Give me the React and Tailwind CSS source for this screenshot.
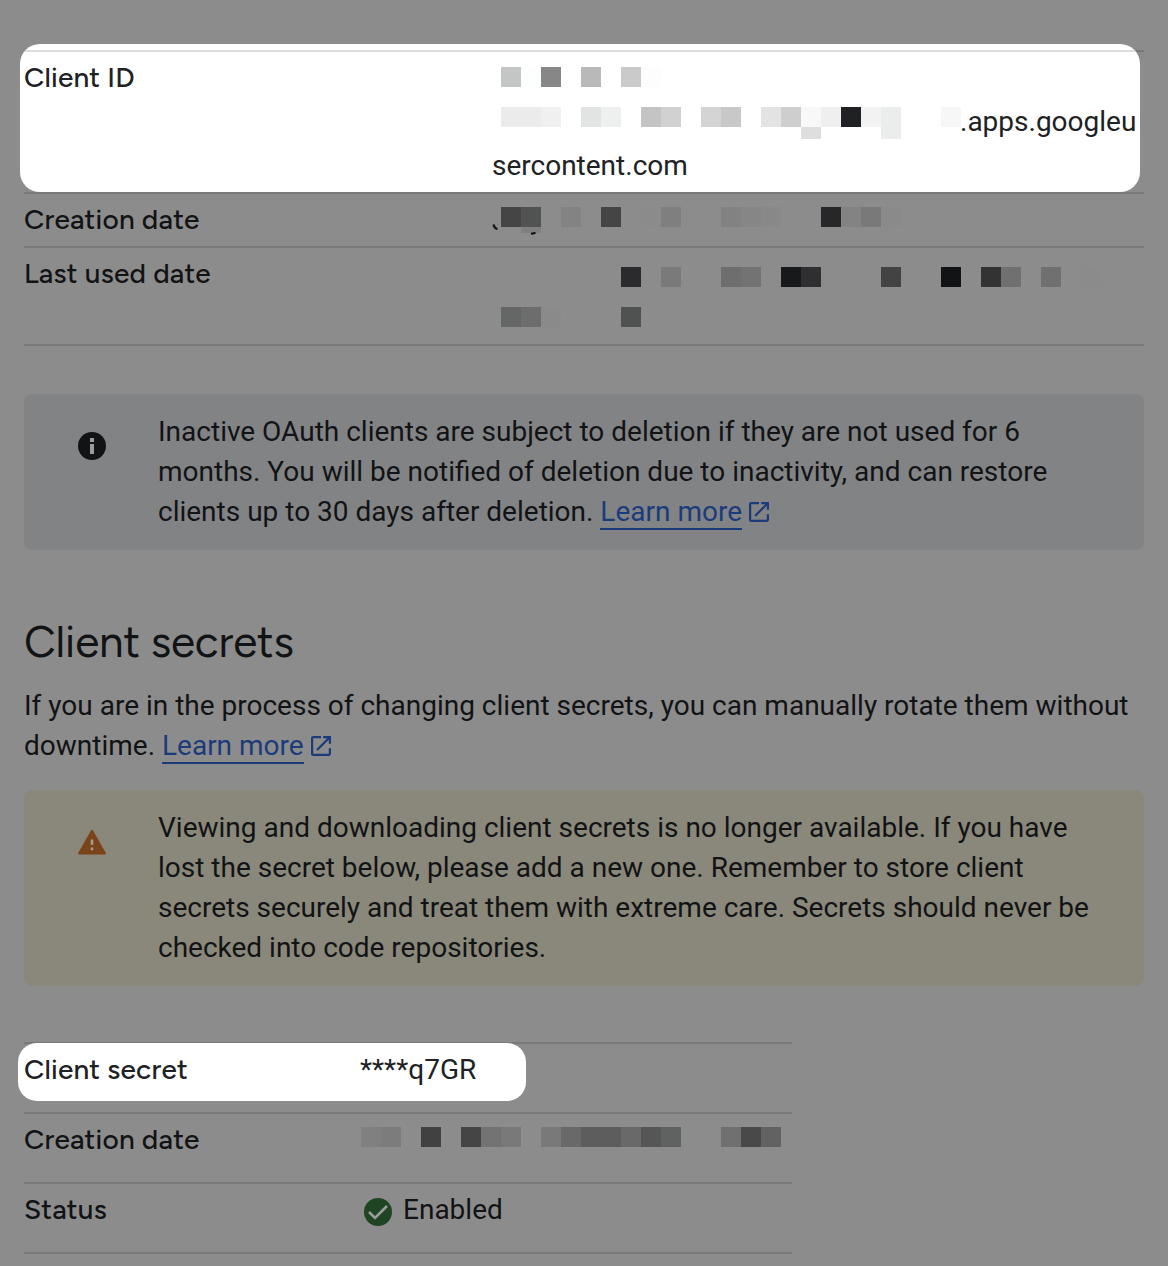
import React from "react";

const BODY = "font-['Roboto',sans-serif] text-[28px] leading-[40px]";

// A strip of 20px blocks that hides a value; null leaves a gap.
function Mosaic({ cells }) {
  return (
    <div className="flex h-5">
      {cells.map((c, i) => (
        <span key={i} className="h-5 w-5 shrink-0" style={{ backgroundColor: c || "transparent" }} />
      ))}
    </div>
  );
}

function Label({ children, className = "" }) {
  return (
    <dt className={"shrink-0 pt-[5px] font-['Figtree','Lato',sans-serif] text-[28px] leading-[40px] font-[550] tracking-[0.2px] " + className}>
      {children}
    </dt>
  );
}

function LearnMore() {
  return (
    <a className="text-[#1b3b7b]">
      <span className="inline-block h-[38px] border-b-2 border-[#1b3b7b] leading-[40px]">Learn more</span>
      <svg className="ml-[7px] inline-block align-[-1px]" width="20" height="20" viewBox="3 3 18 18" fill="currentColor">
        <path d="M19 19H5V5h7V3H5a2 2 0 0 0-2 2v14a2 2 0 0 0 2 2h14c1.1 0 2-.9 2-2v-5h-2v5zM14 3v2h3.59l-9.83 9.83 1.41 1.41L19 6.41V10h2V3h-7z" />
      </svg>
    </a>
  );
}

function Notice({ tone, icon, children }) {
  return (
    <div className={"flex rounded-[8px] py-[18px] " + tone}>
      <div className="w-[134px] shrink-0 pl-[54px]">{icon}</div>
      <p className="whitespace-nowrap">{children}</p>
    </div>
  );
}

export default function App() {
  return (
    <main className={"h-[1266px] w-[1168px] overflow-hidden bg-[#8c8c8c] px-6 pt-[50px] text-[#121315] " + BODY}>
      <dl className="border-b-2 border-[#797979]">
        <div className="relative flex h-[142px] border-t-2 border-[#797979] text-[#202124]">
          <div className="absolute -top-[8px] -left-[4.5px] h-[147.5px] w-[1120.5px] overflow-hidden rounded-[20px] bg-white pt-[6px]">
            <div className="h-[2px] bg-[#dadce0]" />
          </div>
          <Label className="relative w-[468px]">Client ID</Label>
          <dd className="relative pt-[15px]">
            <div className="pl-[9px]">
              <Mosaic cells={["#c4c6c5", "#fcfffe", "#878787", null, "#b9b9b9", null, "#cacaca", "#fdfdfd"]} />
            </div>
            <div className="mt-[13px] flex h-[44px]">
              <div className="w-[468px] shrink-0 pt-[7px] pl-[9px]">
                <Mosaic
                  cells={["#ebebeb", "#ebebeb", "#f0f0f0", null, "#e2e4e3", "#eef0ef", null, "#c4c4c4", "#d1d1d1", null, "#d4d4d4", "#c8c8c8", null, "#e3e3e3", "#cecece", "#f8f8f8", "#efefef", "#202124", "#f2f2f2", "#ebedec", null, null, "#f7f7f7"]}
                />
                <div className="flex gap-[60px] pl-[300px]">
                  <span className="h-[12px] w-5 bg-[#dedede]" />
                  <span className="h-[12px] w-5 bg-[#ebecec]" />
                </div>
              </div>
              <span className="leading-[44px]">.apps.googleu</span>
            </div>
            <div className="leading-[44px]">sercontent.com</div>
          </dd>
        </div>

        <div className="flex h-[54px] border-t-2 border-[#797979]">
          <Label className="w-[468px]">Creation date</Label>
          <dd className="relative pt-[13px] pl-[9px]">
            <Mosaic
              cells={["#454545", "#505352", null, "#838383", null, "#454545", null, "#8b8b8b", "#7f7f7f", null, null, "#828282", "#868686", "#888888", null, null, "#27272a", "#838383", "#797979", "#8a8a8a"]}
            />
            <span className="absolute top-[33px] left-[29px] h-[6px] w-5 bg-[#7f7f7f]" />
            <svg className="absolute top-[29px] left-0" width="50" height="12" viewBox="0 0 50 12" fill="none" stroke="#121315" strokeWidth="2.2">
              <path d="M1.500 1.500C2 4 3 5.400 5.500 6" />
              <path d="M39 10.500C41 10.700 42.500 10.300 43.500 9.500" />
            </svg>
          </dd>
        </div>

        <div className="flex h-[98px] border-t-2 border-[#797979]">
          <Label className="w-[468px]">Last used date</Label>
          <dd className="flex flex-col gap-5 pt-[19px] pl-[9px]">
            <Mosaic
              cells={[null, null, null, null, null, null, "#2b2b2d", null, "#7a7a7a", null, null, "#6e6e6e", "#737373", null, "#18191a", "#2f2f31", null, null, null, "#434343", null, null, "#121315", null, "#333333", "#707070", null, "#707070", null, "#8b8b8b"]}
            />
            <Mosaic cells={["#646766", "#6d6d6d", "#8a8a8a", null, null, null, "#4f5251"]} />
          </dd>
        </div>
      </dl>

      <div className="mt-[48px]">
        <Notice
          tone="bg-[#828385]"
          icon={
            <svg className="mt-5 block" width="28" height="28" viewBox="0 0 28 28">
              <circle cx="14" cy="14" r="14" fill="#121315" />
              <path d="M12 6h4v4h-4zM12 12h4v10h-4z" fill="#9a9b9d" />
            </svg>
          }
        >
          Inactive OAuth clients are subject to deletion if they are not used for 6<br />
          months. You will be notified of deletion due to inactivity, and can restore<br />
          clients up to 30 days after deletion. <LearnMore />
        </Notice>
      </div>

      <h2 className="mt-[64px] font-['Figtree','Lato',sans-serif] text-[44px] leading-[56px] font-normal tracking-[-0.15px]">Client secrets</h2>
      <p className="mt-[16px] h-20 whitespace-nowrap">
        If you are in the process of changing client secrets, you can manually rotate them without<br />
        downtime. <LearnMore />
      </p>

      <div className="mt-[24px]">
        <Notice
          tone="bg-[#8a887a]"
          icon={
            <svg className="mt-[21px] block" width="28" height="26" viewBox="0 0 28 26">
              <path d="M13 1.500Q14 0 15 1.500L27.700 23.800Q28.400 25.500 26.800 25.500H1.200Q-.4 25.500 .3 23.800Z" fill="#7a441b" />
              <path d="M12.700 10.500h2.600v5.500h-2.600zM12.700 18.500h2.600v2.700h-2.600z" fill="#a39c8b" />
            </svg>
          }
        >
          Viewing and downloading client secrets is no longer available. If you have<br />
          lost the secret below, please add a new one. Remember to store client<br />
          secrets securely and treat them with extreme care. Secrets should never be<br />
          checked into code repositories.
        </Notice>
      </div>

      <dl className="mt-[56px] w-[768px] border-b-2 border-[#797979]">
        <div className="relative flex h-[70px] border-t-2 border-[#797979] text-[#202124]">
          <div className="absolute -top-[1px] -left-[6px] h-[58px] w-[508px] rounded-[19px] bg-white" />
          <Label className="relative w-[336px]">Client secret</Label>
          <dd className="relative pt-[6px]">****q7GR</dd>
        </div>
        <div className="flex h-[70px] border-t-2 border-[#797979]">
          <Label className="w-[336px]">Creation date</Label>
          <dd className="pt-[13px] pl-[1px]">
            <Mosaic
              cells={["#808080", "#7c7c7c", null, "#414141", null, "#454545", "#737373", "#797979", null, "#797979", "#696969", "#5d5d5d", "#5d5d5d", "#696969", "#565656", "#5f6261", null, null, "#707070", "#494949", "#626262"]}
            />
          </dd>
        </div>
        <div className="flex h-[70px] border-t-2 border-[#797979]">
          <Label className="w-[336px]">Status</Label>
          <dd className="flex pt-[6px] pl-[4px]">
            <svg className="mt-2 mr-[11px]" width="28" height="28" viewBox="0 0 28 28">
              <circle cx="14" cy="14" r="14" fill="#1f4423" />
              <path d="M5 14L11 20L23 8" fill="none" stroke="#9b9d9b" strokeWidth="2.600" />
            </svg>
            Enabled
          </dd>
        </div>
      </dl>
    </main>
  );
}
